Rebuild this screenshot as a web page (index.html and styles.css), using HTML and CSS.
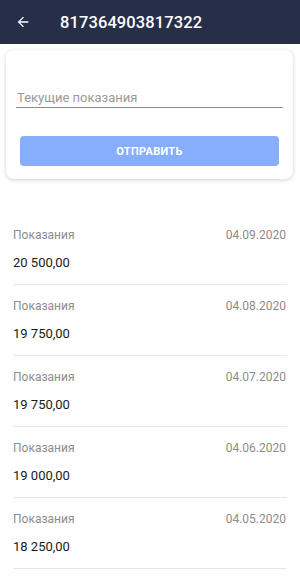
FILE: index.html
```html
<!DOCTYPE html>
<html lang="ru">
<head>
  <meta charset="UTF-8">
  <meta name="viewport" content="width=device-width, initial-scale=1.0">
  <title>Показания</title>
  <link rel="stylesheet" href="styles.css">
</head>
<body>

  <!-- Шапка -->
  <header class="topbar">
    <button class="back-button" aria-label="Назад">
      <svg width="16" height="16" viewBox="0 0 24 24"><path d="M20 11H7.83l5.59-5.59L12 4l-8 8 8 8 1.41-1.41L7.83 13H20v-2z" fill="#fff"/></svg>
    </button>
    <h1 class="topbar-title">817364903817322</h1>
  </header>

  <!-- Форма ввода -->
  <div class="card">
    <input type="text" class="reading-input" placeholder="Текущие показания">
    <button class="send-button">Отправить</button>
  </div>

  <!-- История показаний -->
  <ul class="history">
    <li class="history-item">
      <div class="history-row"><span class="history-label">Показания</span><span class="history-date">04.09.2020</span></div>
      <div class="history-value">20 500,00</div>
    </li>
    <li class="history-item">
      <div class="history-row"><span class="history-label">Показания</span><span class="history-date">04.08.2020</span></div>
      <div class="history-value">19 750,00</div>
    </li>
    <li class="history-item">
      <div class="history-row"><span class="history-label">Показания</span><span class="history-date">04.07.2020</span></div>
      <div class="history-value">19 750,00</div>
    </li>
    <li class="history-item">
      <div class="history-row"><span class="history-label">Показания</span><span class="history-date">04.06.2020</span></div>
      <div class="history-value">19 000,00</div>
    </li>
    <li class="history-item">
      <div class="history-row"><span class="history-label">Показания</span><span class="history-date">04.05.2020</span></div>
      <div class="history-value">18 250,00</div>
    </li>
  </ul>

</body>
</html>
```

FILE: styles.css
```css
/* Общие стили */
body {
  margin: 0;
  font-family: Roboto, "Noto Sans", Arial, sans-serif;
  background-color: #ffffff;
  color: #1a1a1a;
}

/* Шапка */
.topbar {
  height: 44px;
  background-color: #262e48;
  display: flex;
  align-items: center;
  padding: 0 15px;
}

.back-button {
  background: none;
  border: none;
  padding: 0;
  width: 16px;
  height: 16px;
  display: flex;
  margin-right: 29px;
  cursor: pointer;
}

.topbar-title {
  margin: 0;
  color: #ffffff;
  font-size: 16.5px;
  font-weight: 500;
  letter-spacing: 0.1px;
}

/* Карточка с формой */
.card {
  margin: 6px 7px 0 6px;
  padding: 32px 10px 13px 10px;
  background-color: #ffffff;
  border-radius: 8px;
  box-shadow: 0 1px 4px rgba(0, 0, 0, 0.18);
  display: flex;
  flex-direction: column;
}

.reading-input {
  border: none;
  border-bottom: 1px solid #8a8a8a;
  padding: 8px 1px 2px 1px;
  font-family: inherit;
  font-size: 13px;
  color: #333;
  outline: none;
}

.reading-input::placeholder {
  color: #9a9a9a;
}

.send-button {
  margin: 28px 4px 0 4px;
  height: 30px;
  background-color: #86aefa;
  color: #ffffff;
  border: none;
  border-radius: 4px;
  font-family: inherit;
  font-size: 11px;
  font-weight: 700;
  text-transform: uppercase;
  letter-spacing: 0.3px;
  cursor: pointer;
}

/* Список показаний */
.history {
  list-style: none;
  margin: 35px 0 0 0;
  padding: 0 13px;
}

.history-item {
  border-bottom: 1px solid #e6e6e6;
  padding: 14px 0 14px 0;
}

.history-row {
  display: flex;
  justify-content: space-between;
  font-size: 12px;
  line-height: 14px;
  color: #8c8c8c;
}

.history-date {
  margin-right: 1px;
}

.history-value {
  margin-top: 13px;
  font-size: 13px;
  line-height: 15px;
  color: #1a1a1a;
}
```
